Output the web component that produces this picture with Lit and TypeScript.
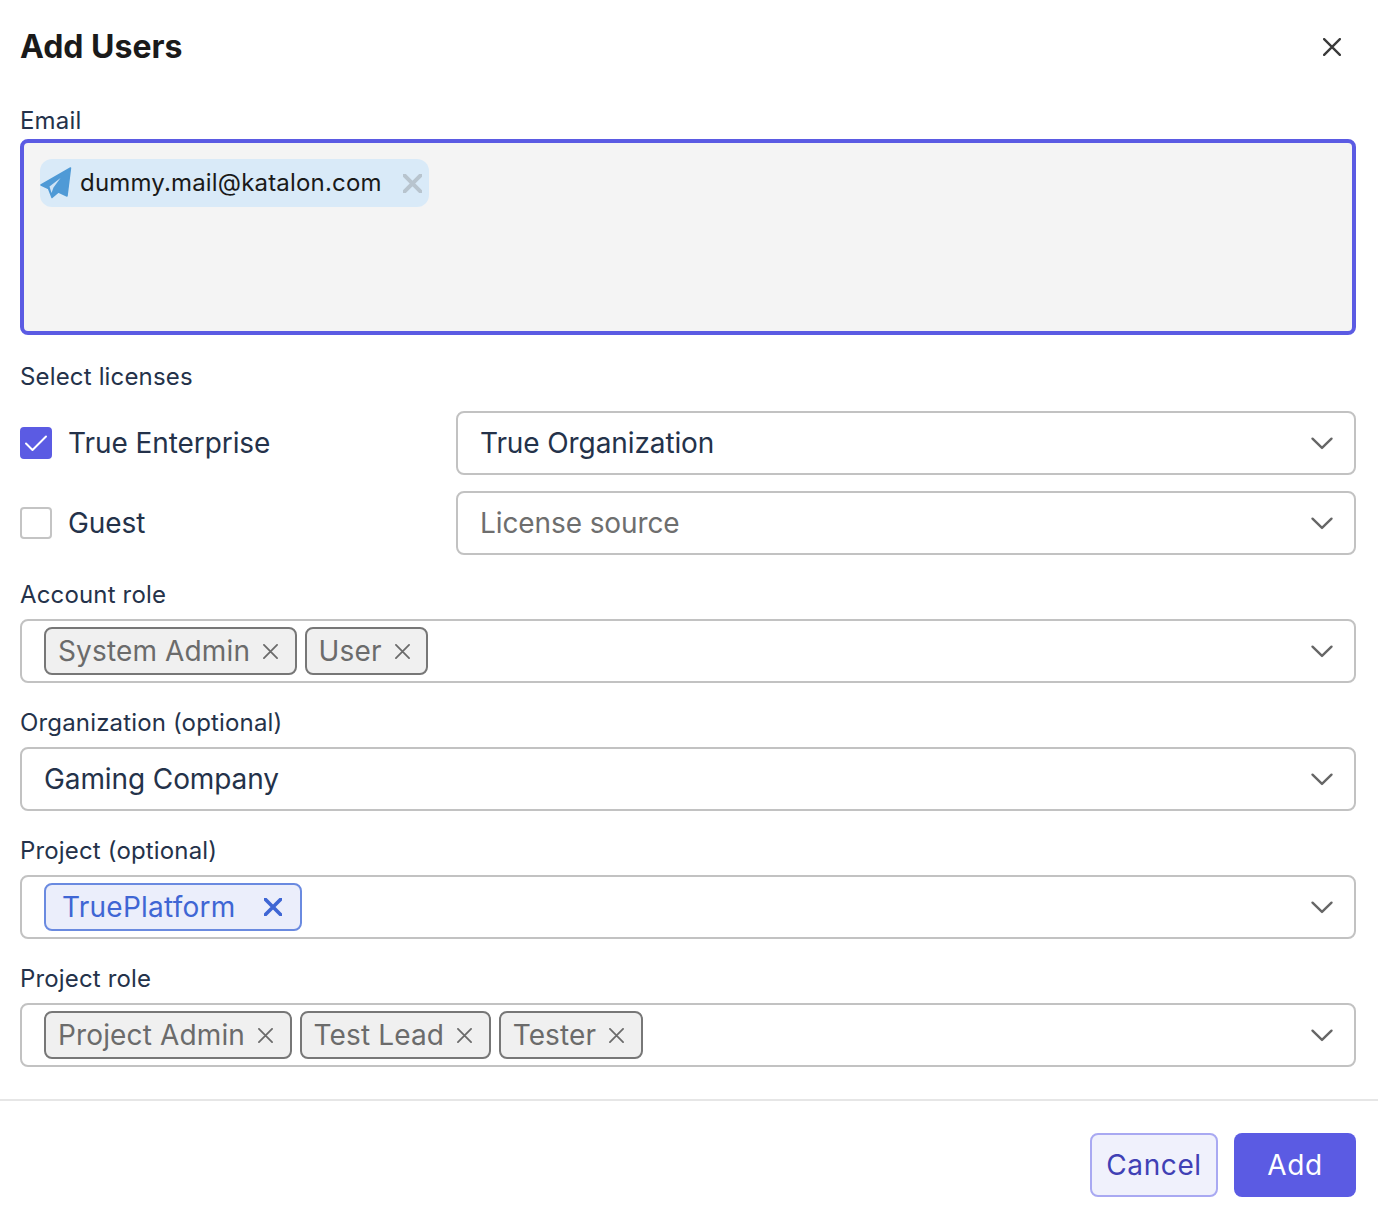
import { LitElement, html, css } from "lit";
import { customElement } from "lit/decorators.js";

const chevron = html`<svg class="chev" width="24" height="24" viewBox="0 0 24 24" fill="none"><path d="M2.5 7.7 L12 16.9 L21.5 7.7" stroke="#666" stroke-width="2.4" stroke-linecap="round" stroke-linejoin="round"/></svg>`;
const x = (size: number, w: number, color: string) => html`<svg class="x" width=${size} height=${size} viewBox="0 0 16 16" fill="none"><path d="M1 1 L15 15 M15 1 L1 15" stroke=${color} stroke-width=${w} stroke-linecap="round"/></svg>`;

@customElement("app-root")
export class AppRoot extends LitElement {
  static styles = css`
    :host { display: block; width: 1378px; height: 1214px; background: #fff; font-family: Inter, "Liberation Sans", sans-serif; font-optical-sizing: none; color: #1f2a3d; box-sizing: border-box; overflow: hidden; }
    * { box-sizing: border-box; }
    .body { padding: 27px 22px 0 20px; }
    .header { display: flex; justify-content: space-between; align-items: center; height: 40px; }
    h1 { margin: 0; font-size: 32px; line-height: 40px; font-weight: 700; color: #1a1a1a; }
    .close { margin-right: 15px; display: flex; }
    .label { font-size: 24px; line-height: 32px; color: #24324a; font-weight: 400; display: block; letter-spacing: 0.16px; }
    .email-label { margin-top: 38px; margin-bottom: 2px; }
    .email { height: 196px; border: 4px solid #5b5be3; border-radius: 8px; background: #f4f4f4; padding: 16px; }
    .chip { display: inline-flex; align-items: center; height: 48px; background: #d9eaf8; border-radius: 12px; width: 389px; font-size: 24px; letter-spacing: 0.18px; color: #1a1a1a; }
    .chip .plane { margin-right: 8px; flex: none; }
    .chip .t { flex: 1; white-space: nowrap; padding-bottom: 2px; }
    .chip .x { margin-right: 7px; flex: none; }
    .lic-label { margin-top: 26px; margin-bottom: 18px; }
    .row { display: grid; grid-template-columns: 436px 1fr; align-items: center; margin-bottom: 16px; }
    .check { display: flex; align-items: center; gap: 16px; font-size: 28px; letter-spacing: -0.07px; color: #24324a; }
    .box { width: 32px; height: 32px; border-radius: 4px; border: 2px solid #c4c4c4; display: flex; align-items: center; justify-content: center; background: #fff; }
    .box.on { background: #5b5be3; border-color: #5b5be3; }
    .select { height: 64px; border: 2px solid #c2c2c2; border-radius: 8px; display: flex; align-items: center; justify-content: space-between; padding: 0 20px 0 22px; font-size: 28px; letter-spacing: -0.1px; color: #24324a; background: #fff; }
    .select.ph { color: #6e6e6e; }
    .fld-label { margin-top: 24px; margin-bottom: 8px; }
    .tags { display: flex; gap: 8px; align-items: center; letter-spacing: 0.14px; }
    .tag { height: 48px; display: inline-flex; align-items: center; justify-content: space-between; border: 2px solid #777; border-radius: 8px; background: #f0f0f0; color: #6b6b6b; font-size: 28px; padding: 0 16.5px 0 12px; }
    .tag .x { margin-left: 13px; flex: none; }
    .tag.blue { border-color: #6a8ae0; background: #ebeefb; color: #3f66d4; padding: 0 10px 0 16px; width: 258px; letter-spacing: 0.25px; }
    .tag.blue .x { margin-left: 0; margin-right: 8px; }
    .divider { height: 2px; background: #e6e6e6; margin-top: 32px; }
    .footer { display: flex; justify-content: flex-end; gap: 16px; padding: 32px 22px 0 0; }
    .btn { height: 64px; border-radius: 8px; font-family: inherit; font-optical-sizing: none; font-size: 28px; display: flex; align-items: center; justify-content: center; letter-spacing: 0.6px; }
    .cancel { width: 128px; background: #f0f1fc; border: 2px solid #a9a9f2; color: #4040b5; }
    .add { width: 122px; background: #5b5be3; border: 0; color: #fff; }
  `;

  private tag(t: string) {
    return html`<span class="tag">${t}${x(15, 1.9, "#6b6b6b")}</span>`;
  }

  render() {
    return html`
      <div class="body">
        <div class="header"><h1>Add Users</h1><span class="close">${x(18, 2.1, "#3a3a3a")}</span></div>
        <span class="label email-label">Email</span>
        <div class="email">
          <span class="chip">
            <svg class="plane" width="32" height="32" viewBox="0 0 32 32">
              <path d="M30.5 1 L1 18 L8.5 21.5 L12 30.5 L18.5 25 L27 29 Z" fill="#4f9ad6" stroke="#4f9ad6" stroke-width="1.5" stroke-linejoin="round"/>
              <path d="M20.5 11 L9.5 19.5 L11.5 26 L13.5 20.5 Z" fill="#cfe3f5"/>
            </svg>
            <span class="t">dummy.mail@katalon.com</span>
            ${x(19, 3.4, "#b8c4ce")}
          </span>
        </div>
        <span class="label lic-label">Select licenses</span>
        <div class="row">
          <label class="check"><span class="box on"><svg width="24" height="24" viewBox="0 0 24 24" fill="none"><path d="M2 12.5 L8.5 19 L22 5.5" stroke="#fff" stroke-width="2" stroke-linecap="round" stroke-linejoin="round"/></svg></span>True Enterprise</label>
          <div class="select"><span>True Organization</span>${chevron}</div>
        </div>
        <div class="row">
          <label class="check"><span class="box"></span>Guest</label>
          <div class="select ph"><span>License source</span>${chevron}</div>
        </div>
        <span class="label fld-label">Account role</span>
        <div class="select"><div class="tags">${this.tag("System Admin")}${this.tag("User")}</div>${chevron}</div>
        <span class="label fld-label">Organization (optional)</span>
        <div class="select"><span>Gaming Company</span>${chevron}</div>
        <span class="label fld-label">Project (optional)</span>
        <div class="select"><div class="tags"><span class="tag blue">TruePlatform${x(18, 3.2, "#3f66d4")}</span></div>${chevron}</div>
        <span class="label fld-label">Project role</span>
        <div class="select"><div class="tags">${this.tag("Project Admin")}${this.tag("Test Lead")}${this.tag("Tester")}</div>${chevron}</div>
      </div>
      <div class="divider"></div>
      <div class="footer">
        <button class="btn cancel">Cancel</button>
        <button class="btn add">Add</button>
      </div>
    `;
  }
}
